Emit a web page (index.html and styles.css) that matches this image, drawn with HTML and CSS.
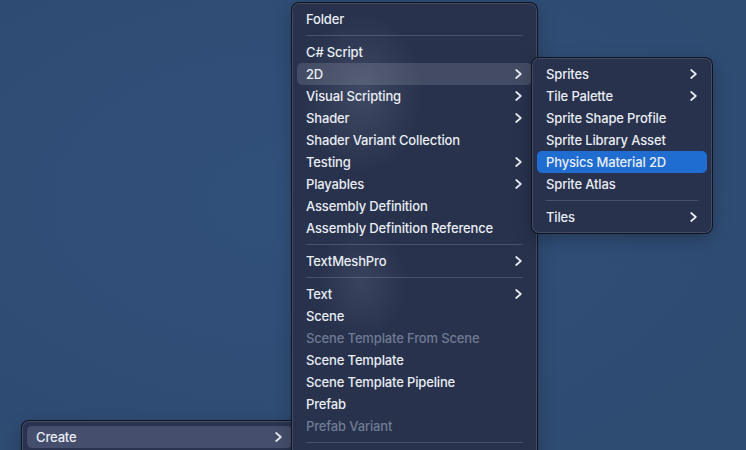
FILE: index.html
```html
<!DOCTYPE html>
<html>
<head>
<meta charset="utf-8">
<link rel="stylesheet" href="styles.css">
</head>
<body>
<div class="desktop">
  <div class="menu menu-create">
    <div class="item hover"><span>Create</span><svg class="chev" viewBox="0 0 7 10"><polyline points="1.2,1 5.8,5 1.2,9"/></svg></div>
  </div>

  <div class="menu menu-main">
    <div class="item"><span>Folder</span></div>
    <div class="sep"></div>
    <div class="item"><span>C# Script</span></div>
    <div class="item hover"><span>2D</span><svg class="chev" viewBox="0 0 7 10"><polyline points="1.2,1 5.8,5 1.2,9"/></svg></div>
    <div class="item"><span>Visual Scripting</span><svg class="chev" viewBox="0 0 7 10"><polyline points="1.2,1 5.8,5 1.2,9"/></svg></div>
    <div class="item"><span>Shader</span><svg class="chev" viewBox="0 0 7 10"><polyline points="1.2,1 5.8,5 1.2,9"/></svg></div>
    <div class="item"><span>Shader Variant Collection</span></div>
    <div class="item"><span>Testing</span><svg class="chev" viewBox="0 0 7 10"><polyline points="1.2,1 5.8,5 1.2,9"/></svg></div>
    <div class="item"><span>Playables</span><svg class="chev" viewBox="0 0 7 10"><polyline points="1.2,1 5.8,5 1.2,9"/></svg></div>
    <div class="item"><span>Assembly Definition</span></div>
    <div class="item"><span>Assembly Definition Reference</span></div>
    <div class="sep"></div>
    <div class="item"><span>TextMeshPro</span><svg class="chev" viewBox="0 0 7 10"><polyline points="1.2,1 5.8,5 1.2,9"/></svg></div>
    <div class="sep"></div>
    <div class="item"><span>Text</span><svg class="chev" viewBox="0 0 7 10"><polyline points="1.2,1 5.8,5 1.2,9"/></svg></div>
    <div class="item"><span>Scene</span></div>
    <div class="item disabled"><span>Scene Template From Scene</span></div>
    <div class="item"><span>Scene Template</span></div>
    <div class="item"><span>Scene Template Pipeline</span></div>
    <div class="item"><span>Prefab</span></div>
    <div class="item disabled"><span>Prefab Variant</span></div>
    <div class="sep"></div>
  </div>

  <div class="menu menu-sub">
    <div class="item"><span>Sprites</span><svg class="chev" viewBox="0 0 7 10"><polyline points="1.2,1 5.8,5 1.2,9"/></svg></div>
    <div class="item"><span>Tile Palette</span><svg class="chev" viewBox="0 0 7 10"><polyline points="1.2,1 5.8,5 1.2,9"/></svg></div>
    <div class="item"><span>Sprite Shape Profile</span></div>
    <div class="item"><span>Sprite Library Asset</span></div>
    <div class="item selected"><span>Physics Material 2D</span></div>
    <div class="item"><span>Sprite Atlas</span></div>
    <div class="sep"></div>
    <div class="item"><span>Tiles</span><svg class="chev" viewBox="0 0 7 10"><polyline points="1.2,1 5.8,5 1.2,9"/></svg></div>
  </div>
</div>
</body>
</html>
```
FILE: styles.css
```css
html, body {
  margin: 0;
  padding: 0;
}
body {
  width: 746px;
  height: 450px;
  overflow: hidden;
  background: #2f4c74;
  font-family: Inter, "Noto Sans", "Liberation Sans", sans-serif;
  font-size: 13px;
  font-weight: 500;
  letter-spacing: -0.15px;
  color: #e9edf4;
}
.desktop {
  position: relative;
  width: 746px;
  height: 450px;
  overflow: hidden;
  background: radial-gradient(ellipse 500px 300px at 300px 200px, #31507a 0%, #2e4b72 100%);
}
.menu {
  position: absolute;
  display: flex;
  flex-direction: column;
  padding: 5px 5px;
  background: #28324d;
  border-radius: 7px;
  box-shadow: 0 0 0 1px #10141f, inset 0 0 0 1px rgba(255,255,255,0.13), 0 6px 18px rgba(0,0,0,0.25);
  box-sizing: border-box;
}
.menu-main {
  left: 292px;
  top: 3px;
  width: 245px;
  height: 470px;
  background:
    radial-gradient(ellipse 60px 80px at 70px 90px, rgba(135,145,170,0.24), rgba(135,145,170,0) 100%),
    radial-gradient(ellipse 45px 55px at 70px 280px, rgba(135,145,170,0.18), rgba(135,145,170,0) 100%),
    #28324d;
}
.menu-sub {
  left: 532px;
  top: 58px;
  width: 180px;
  z-index: 3;
}
.menu-create {
  left: 22px;
  top: 421px;
  width: 275px;
  height: 60px;
  background: #2a3450;
}
.item {
  height: 22px;
  display: flex;
  align-items: center;
  justify-content: space-between;
  padding: 0 10px 0 9px;
  border-radius: 5px;
  white-space: nowrap;
  flex-shrink: 0;
}
.item.hover {
  background: rgba(255,255,255,0.13);
}
.menu-create .item.hover {
  background: #454e6c;
}
.item.selected {
  background: #1f6dd0;
}
.item.disabled {
  color: #6f7a93;
}
.chev {
  width: 7px;
  height: 10px;
  fill: none;
  stroke: #e9edf4;
  stroke-width: 1.7;
  stroke-linecap: round;
  stroke-linejoin: round;
}
.sep {
  height: 11px;
  flex-shrink: 0;
  display: flex;
  align-items: center;
  padding: 0 9px;
}
.sep::before {
  content: "";
  display: block;
  height: 1px;
  flex: 1;
  background: rgba(255,255,255,0.16);
}
```
